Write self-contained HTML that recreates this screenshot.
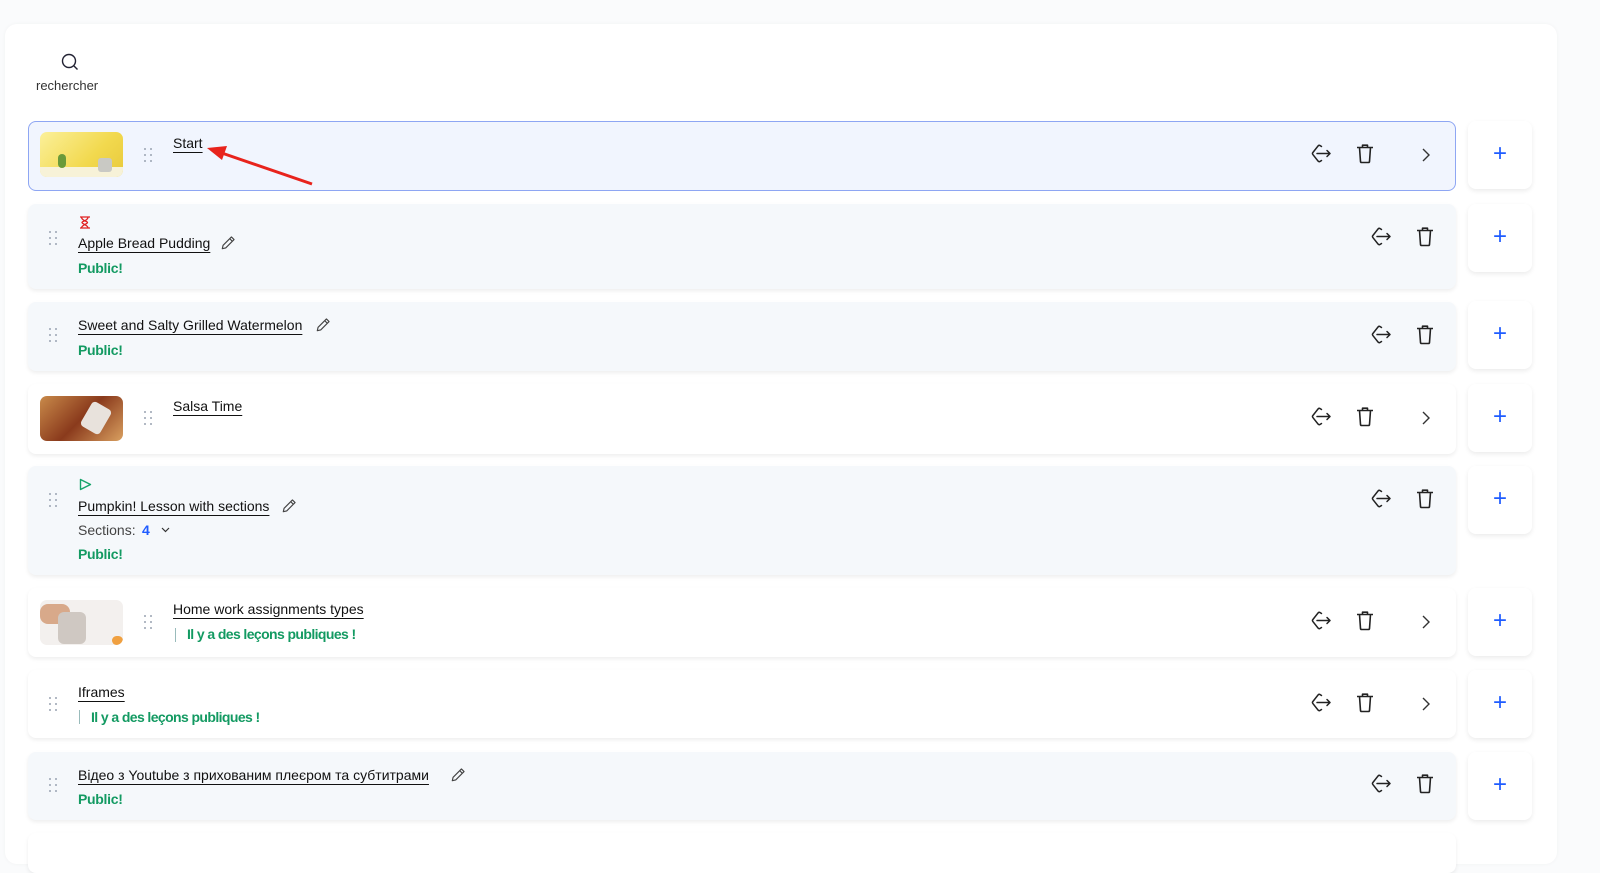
<!DOCTYPE html>
<html><head><meta charset="utf-8"><style>
*{box-sizing:border-box;margin:0;padding:0}
body{width:1600px;height:855px;background:#fafbfc;font-family:"Liberation Sans","Noto Sans CJK SC",sans-serif;position:relative;overflow:hidden;color:#111}
.panel{position:absolute;left:5px;top:24px;width:1552px;height:840px;background:#fff;border-radius:12px;box-shadow:0 0 4px rgba(0,0,0,.04)}
.card{position:absolute;left:28px;width:1428px;border-radius:8px;box-shadow:0 2px 4px rgba(0,0,0,.07);background:#fff}
.g{background:#f5f8fb}
.sel{background:#f1f5fe;border:1px solid #8ea6f3;box-shadow:none}
.plus{position:absolute;left:1468px;width:64px;height:68px;background:#fff;border-radius:8px;box-shadow:0 2px 5px rgba(0,0,0,.08);color:#1f5cff;font-size:24px;text-align:center;line-height:66px;font-weight:300}
.t{position:absolute;font-size:14px;color:#111;text-decoration:underline;text-underline-offset:4px;text-decoration-thickness:1px;white-space:nowrap}
.pub{position:absolute;font-size:14px;color:#139a62;font-weight:bold;letter-spacing:-0.3px;white-space:nowrap}
.dots{position:absolute;width:8px;height:14px}
.dots i{position:absolute;width:2px;height:2px;background:#9aa3b2;border-radius:1px}
.ic{position:absolute}
.thumb{position:absolute;left:12px;width:83px;height:45px;border-radius:7px;overflow:hidden}
.bar{position:absolute;width:1px;height:14px;background:#9bb}
</style></head><body>
<div class="panel"></div>
<svg class="ic" style="left:60px;top:52px" width="20" height="20" viewBox="0 0 20 20"><circle cx="9" cy="9" r="6.5" fill="none" stroke="#223" stroke-width="1.4"/><path d="M14 14l3.5 3.5" stroke="#223" stroke-width="1.4"/></svg>
<div style="position:absolute;left:36px;top:78px;font-size:13px;color:#333">rechercher</div>

<div class="card sel" style="top:121px;height:70px"></div>
<div class="card g" style="top:204px;height:85px"></div>
<div class="card g" style="top:302px;height:69px"></div>
<div class="card" style="top:384px;height:70px"></div>
<div class="card g" style="top:466px;height:109px"></div>
<div class="card" style="top:588px;height:69px"></div>
<div class="card" style="top:670px;height:68px"></div>
<div class="card g" style="top:752px;height:68px"></div>
<div class="card" style="top:833px;height:40px"></div>

<div class="plus" style="top:121px">+</div>
<div class="plus" style="top:204px">+</div>
<div class="plus" style="top:301px">+</div>
<div class="plus" style="top:384px">+</div>
<div class="plus" style="top:466px">+</div>
<div class="plus" style="top:588px">+</div>
<div class="plus" style="top:670px">+</div>
<div class="plus" style="top:752px">+</div>

<div class="thumb" style="left:40px;top:132px;background:linear-gradient(135deg,#fbf09a,#f2d94e 60%,#e8c93c)"><div style="position:absolute;left:0;bottom:0;width:83px;height:10px;background:#f7f2d8"></div><div style="position:absolute;left:18px;top:22px;width:8px;height:14px;background:#6a9a3a;border-radius:4px"></div><div style="position:absolute;left:58px;top:26px;width:14px;height:14px;background:#c9c9c4;border-radius:3px"></div></div>
<div class="thumb" style="left:40px;top:396px;background:linear-gradient(135deg,#c98a4a,#8a3a1c 50%,#d9a060)"><div style="position:absolute;left:45px;top:8px;width:22px;height:28px;background:#e8e2dc;border-radius:4px;transform:rotate(30deg)"></div></div>
<div class="thumb" style="left:40px;top:600px;background:#f3f0ee"><div style="position:absolute;left:0;top:4px;width:30px;height:20px;background:#d8a98a;border-radius:8px"></div><div style="position:absolute;left:18px;top:12px;width:28px;height:32px;background:#cfc8c2;border-radius:6px"></div><div style="position:absolute;left:72px;top:36px;width:11px;height:9px;background:#f0a040;border-radius:5px"></div></div>

<div class="dots" style="left:144px;top:148px"><i style="left:0;top:0"></i><i style="left:6px;top:0"></i><i style="left:0;top:6px"></i><i style="left:6px;top:6px"></i><i style="left:0;top:12px"></i><i style="left:6px;top:12px"></i></div>
<div class="dots" style="left:49px;top:231px"><i style="left:0;top:0"></i><i style="left:6px;top:0"></i><i style="left:0;top:6px"></i><i style="left:6px;top:6px"></i><i style="left:0;top:12px"></i><i style="left:6px;top:12px"></i></div>
<div class="dots" style="left:49px;top:328px"><i style="left:0;top:0"></i><i style="left:6px;top:0"></i><i style="left:0;top:6px"></i><i style="left:6px;top:6px"></i><i style="left:0;top:12px"></i><i style="left:6px;top:12px"></i></div>
<div class="dots" style="left:144px;top:411px"><i style="left:0;top:0"></i><i style="left:6px;top:0"></i><i style="left:0;top:6px"></i><i style="left:6px;top:6px"></i><i style="left:0;top:12px"></i><i style="left:6px;top:12px"></i></div>
<div class="dots" style="left:49px;top:493px"><i style="left:0;top:0"></i><i style="left:6px;top:0"></i><i style="left:0;top:6px"></i><i style="left:6px;top:6px"></i><i style="left:0;top:12px"></i><i style="left:6px;top:12px"></i></div>
<div class="dots" style="left:144px;top:615px"><i style="left:0;top:0"></i><i style="left:6px;top:0"></i><i style="left:0;top:6px"></i><i style="left:6px;top:6px"></i><i style="left:0;top:12px"></i><i style="left:6px;top:12px"></i></div>
<div class="dots" style="left:49px;top:697px"><i style="left:0;top:0"></i><i style="left:6px;top:0"></i><i style="left:0;top:6px"></i><i style="left:6px;top:6px"></i><i style="left:0;top:12px"></i><i style="left:6px;top:12px"></i></div>
<div class="dots" style="left:49px;top:778px"><i style="left:0;top:0"></i><i style="left:6px;top:0"></i><i style="left:0;top:6px"></i><i style="left:6px;top:6px"></i><i style="left:0;top:12px"></i><i style="left:6px;top:12px"></i></div>

<div class="t" style="left:173px;top:135px">Start</div>
<svg class="ic" style="left:200px;top:140px" width="120" height="50"><path d="M112 44L16 11" stroke="#e8231c" stroke-width="3"/><path d="M7 8L27 6L22 20Z" fill="#e8231c"/></svg>

<svg class="ic" style="left:79px;top:216px" width="12" height="13" viewBox="0 0 12 13"><path d="M1 1h10M1 12h10M2.5 1c0 4 6 4 6 5.5S2.5 9 2.5 12M9 1c0 4-6 4-6 5.5S9 9 9 12" stroke="#e02020" stroke-width="1.3" fill="none"/></svg>
<div class="t" style="left:78px;top:235px">Apple Bread Pudding</div>
<div class="pub" style="left:78px;top:260px">Public!</div>

<div class="t" style="left:78px;top:317px">Sweet and Salty Grilled Watermelon</div>
<div class="pub" style="left:78px;top:342px">Public!</div>

<div class="t" style="left:173px;top:398px">Salsa Time</div>

<svg class="ic" style="left:79px;top:478px" width="13" height="13" viewBox="0 0 13 13"><path d="M1.5 1.5v10l10-5z" fill="none" stroke="#16a36a" stroke-width="1.4" stroke-linejoin="round"/></svg>
<div class="t" style="left:78px;top:498px">Pumpkin! Lesson with sections</div>
<div style="position:absolute;left:78px;top:522px;font-size:14px;color:#444">Sections:</div>
<div style="position:absolute;left:142px;top:522px;font-size:14px;color:#1f5cff;font-weight:bold">4</div>
<svg class="ic" style="left:161px;top:527px" width="9" height="6"><path d="M1 1l3.5 3.5L8 1" stroke="#333" stroke-width="1.2" fill="none"/></svg>
<div class="pub" style="left:78px;top:546px">Public!</div>

<div class="t" style="left:173px;top:601px">Home work assignments types</div>
<div class="bar" style="left:175px;top:628px"></div>
<div class="pub" style="left:187px;top:626px;letter-spacing:-0.6px">Il y a des leçons publiques !</div>

<div class="t" style="left:78px;top:684px">Iframes</div>
<div class="bar" style="left:79px;top:710px"></div>
<div class="pub" style="left:91px;top:709px;letter-spacing:-0.6px">Il y a des leçons publiques !</div>

<div class="t" style="left:78px;top:767px">Відео з Youtube з прихованим плеєром та субтитрами</div>
<div class="pub" style="left:78px;top:791px">Public!</div>

<svg class="ic" style="left:220px;top:235px" width="16" height="16" viewBox="0 0 14 14"><path d="M2 12l.7-3L10 1.7l2.3 2.3L5 11.3zM8.5 3.2l2.3 2.3" fill="none" stroke="#444" stroke-width="1" stroke-linejoin="round"/></svg>
<svg class="ic" style="left:315px;top:317px" width="16" height="16" viewBox="0 0 14 14"><path d="M2 12l.7-3L10 1.7l2.3 2.3L5 11.3zM8.5 3.2l2.3 2.3" fill="none" stroke="#444" stroke-width="1" stroke-linejoin="round"/></svg>
<svg class="ic" style="left:281px;top:498px" width="16" height="16" viewBox="0 0 14 14"><path d="M2 12l.7-3L10 1.7l2.3 2.3L5 11.3zM8.5 3.2l2.3 2.3" fill="none" stroke="#444" stroke-width="1" stroke-linejoin="round"/></svg>
<svg class="ic" style="left:450px;top:767px" width="16" height="16" viewBox="0 0 14 14"><path d="M2 12l.7-3L10 1.7l2.3 2.3L5 11.3zM8.5 3.2l2.3 2.3" fill="none" stroke="#444" stroke-width="1" stroke-linejoin="round"/></svg>

<svg width="0" height="0" style="position:absolute"><defs>
<g id="sw"><path d="M12.5 4.5L11 3.5Q10 3 9.2 3.8L3.8 10.6Q3.1 11.5 3.8 12.4L9.2 19.2Q10 20 11 19.5L12.5 18.5" fill="none" stroke="#222" stroke-width="1.5" stroke-linecap="round"/><path d="M8 11.5H21M18 8.5l3 3-3 3" fill="none" stroke="#222" stroke-width="1.5" stroke-linecap="round" stroke-linejoin="round"/></g>
<g id="tr"><path d="M3 5.5h16M8.5 5.5V3.2h5v2.3M5.5 5.5l1 14q.1 1 1.1 1h6.8q1 0 1.1-1l1-14" fill="none" stroke="#222" stroke-width="1.6" stroke-linejoin="round"/></g>
<g id="ch"><path d="M9 6l6 6-6 6" fill="none" stroke="#333" stroke-width="1.4"/></g>
</defs></svg>

<svg class="ic" style="left:1309px;top:142px" width="24" height="24"><use href="#sw"/></svg>
<svg class="ic" style="left:1354px;top:142px" width="22" height="24"><use href="#tr"/></svg>
<svg class="ic" style="left:1414px;top:143px" width="22" height="22"><use href="#ch"/></svg>

<svg class="ic" style="left:1369px;top:225px" width="24" height="24"><use href="#sw"/></svg>
<svg class="ic" style="left:1414px;top:225px" width="22" height="24"><use href="#tr"/></svg>

<svg class="ic" style="left:1369px;top:323px" width="24" height="24"><use href="#sw"/></svg>
<svg class="ic" style="left:1414px;top:323px" width="22" height="24"><use href="#tr"/></svg>

<svg class="ic" style="left:1309px;top:405px" width="24" height="24"><use href="#sw"/></svg>
<svg class="ic" style="left:1354px;top:405px" width="22" height="24"><use href="#tr"/></svg>
<svg class="ic" style="left:1414px;top:406px" width="22" height="22"><use href="#ch"/></svg>

<svg class="ic" style="left:1369px;top:487px" width="24" height="24"><use href="#sw"/></svg>
<svg class="ic" style="left:1414px;top:487px" width="22" height="24"><use href="#tr"/></svg>

<svg class="ic" style="left:1309px;top:609px" width="24" height="24"><use href="#sw"/></svg>
<svg class="ic" style="left:1354px;top:609px" width="22" height="24"><use href="#tr"/></svg>
<svg class="ic" style="left:1414px;top:610px" width="22" height="22"><use href="#ch"/></svg>

<svg class="ic" style="left:1309px;top:691px" width="24" height="24"><use href="#sw"/></svg>
<svg class="ic" style="left:1354px;top:691px" width="22" height="24"><use href="#tr"/></svg>
<svg class="ic" style="left:1414px;top:692px" width="22" height="22"><use href="#ch"/></svg>

<svg class="ic" style="left:1369px;top:772px" width="24" height="24"><use href="#sw"/></svg>
<svg class="ic" style="left:1414px;top:772px" width="22" height="24"><use href="#tr"/></svg>
</body></html>
